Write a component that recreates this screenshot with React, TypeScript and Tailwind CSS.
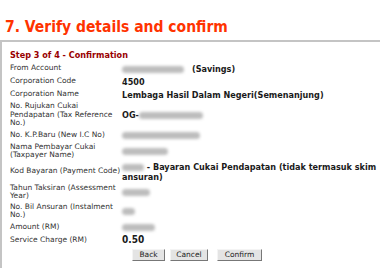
import React from "react";

const Blob = ({ w }: { w: number }) => (
  <span
    className="inline-block h-[7px] rounded-full bg-[#bdbdbd] blur-[1.5px] align-middle"
    style={{ width: w }}
  />
);

type Row = { label: React.ReactNode; value: React.ReactNode; h: string };

export default function App() {
  const rows: Row[] = [
    { label: "From Account", value: (<><Blob w={62} /><span className="ml-[8px]">(Savings)</span></>), h: "h-[13px]" },
    { label: "Corporation Code", value: "4500", h: "h-[13px]" },
    { label: "Corporation Name", value: "Lembaga Hasil Dalam Negeri(Semenanjung)", h: "h-[13px]" },
    {
      label: (<>No. Rujukan Cukai<br />Pendapatan (Tax Reference<br />No.)</>),
      value: (<><span>OG-</span><Blob w={64} /></>),
      h: "h-[27.5px]",
    },
    { label: "No. K.P.Baru (New I.C No)", value: <Blob w={78} />, h: "h-[13px]" },
    { label: (<>Nama Pembayar Cukai<br />(Taxpayer Name)</>), value: <Blob w={46} />, h: "h-[19px]" },
    {
      label: "Kod Bayaran (Payment Code)",
      value: (<><Blob w={22} /> - Bayaran Cukai Pendapatan (tidak termasuk skim<br />ansuran)</>),
      h: "h-[22px]",
    },
    { label: (<>Tahun Taksiran (Assessment<br />Year)</>), value: <Blob w={28} />, h: "h-[19px]" },
    { label: (<>No. Bil Ansuran (Instalment<br />No.)</>), value: <Blob w={13} />, h: "h-[19px]" },
    { label: "Amount (RM)", value: <Blob w={33} />, h: "h-[13px]" },
    { label: "Service Charge (RM)", value: <span className="text-[10px]">0.50</span>, h: "h-[13px]" },
  ];

  return (
    <div className="w-[380px] h-[280px] bg-white overflow-hidden">
      <h1 className="pt-[18px] pl-[5px] text-[15.5px] leading-[19px] font-bold text-[#ff3300] font-['DejaVu_Sans_Condensed','DejaVu_Sans',sans-serif]">
        7. Verify details and confirm
      </h1>
      <div className="mt-[3px] h-[228px] border-t-2 border-l-2 border-[#c4c4c4] pl-[8px] pt-[7px]">
        <div className="text-[9px] leading-[12px] font-bold text-[#990000] font-['DejaVu_Sans_Condensed','DejaVu_Sans',sans-serif]">
          Step 3 of 4 - Confirmation
        </div>
        <div className="mt-[1px] flex flex-col">
          {rows.map((r, i) => (
            <div key={i} className={`flex items-center ${r.h}`}>
              <div className="w-[112px] shrink-0 text-[7.5px] leading-[8.5px] text-[#333333] font-['DejaVu_Sans',sans-serif]">
                {r.label}
              </div>
              <div className="text-[9px] leading-[10px] font-bold text-[#1a1a1a] font-['DejaVu_Sans_Condensed','DejaVu_Sans',sans-serif] whitespace-nowrap">
                {r.value}
              </div>
            </div>
          ))}
        </div>
        <div className="mt-[2px] flex pl-[122px] font-['DejaVu_Sans',sans-serif] text-[7.5px] text-[#222]">
          <button className="h-[12px] w-[33px] bg-[#e4e4e4] border border-t-[#f4f4f4] border-l-[#f4f4f4] border-r-[#777] border-b-[#777] leading-[10px]">Back</button>
          <button className="ml-[5px] h-[12px] w-[38px] bg-[#e4e4e4] border border-t-[#f4f4f4] border-l-[#f4f4f4] border-r-[#777] border-b-[#777] leading-[10px]">Cancel</button>
          <button className="ml-[9px] h-[12px] w-[45px] bg-[#e4e4e4] border border-t-[#f4f4f4] border-l-[#f4f4f4] border-r-[#777] border-b-[#777] leading-[10px]">Confirm</button>
        </div>
      </div>
    </div>
  );
}
